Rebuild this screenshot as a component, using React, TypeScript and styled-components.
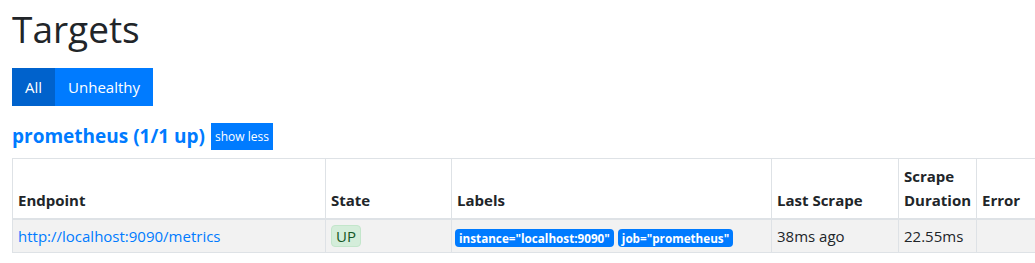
import styled, { createGlobalStyle } from 'styled-components';

const GlobalStyle = createGlobalStyle`
  body {
    margin: 0;
    overflow: hidden;
    background: #ffffff;
    font-family: 'Open Sans', 'Noto Sans', sans-serif;
    font-size: 15px;
    line-height: 1.5;
    color: #212529;
  }
  * {
    box-sizing: border-box;
  }
`;

const Page = styled.div`
  padding: 0 12px;
`;

const Title = styled.h1`
  margin: 6px 0 17px;
  height: 45px;
  font-size: 37px;
  font-weight: 400;
  line-height: 45px;
`;

const FilterGroup = styled.div`
  display: inline-flex;
  height: 38px;
`;

const FilterButton = styled.button<{ $active?: boolean }>`
  border: none;
  padding: 0 13px;
  font-family: inherit;
  font-size: 15px;
  color: #ffffff;
  background: ${(p) => (p.$active ? '#0062cc' : '#007bff')};
`;

const PoolHeader = styled.div`
  display: flex;
  align-items: center;
  gap: 6px;
  margin-top: 16px;
  height: 29px;
`;

const PoolTitle = styled.a`
  font-size: 19px;
  font-weight: 700;
  color: #007bff;
  text-decoration: none;
`;

const SmallButton = styled.button`
  border: none;
  height: 27px;
  padding: 0 4px;
  font-family: inherit;
  font-size: 12px;
  color: #ffffff;
  background: #007bff;
`;

const Table = styled.table`
  margin-top: 7px;
  width: 1100px;
  table-layout: fixed;
  border-collapse: collapse;
`;

const HeadCell = styled.th<{ $w: number }>`
  width: ${(p) => p.$w}px;
  padding: 5px 5px 6px;
  border: 1px solid #dee2e6;
  border-bottom: 2px solid #dee2e6;
  text-align: left;
  vertical-align: bottom;
  font-size: 15px;
  font-weight: 700;
  line-height: 24px;
`;

const Row = styled.tr`
  background: #f2f2f2;
`;

const Cell = styled.td`
  padding: 4px 5px;
  border: 1px solid #dee2e6;
  vertical-align: middle;
  line-height: 24px;
  white-space: nowrap;
`;

const EndpointLink = styled.a`
  color: #007bff;
  text-decoration: none;
`;

const StateBadge = styled.span`
  display: inline-block;
  padding: 0 4px;
  line-height: 20px;
  border: 1px solid #c3e6cb;
  border-radius: 4px;
  background: #d4edda;
  color: #155724;
`;

const LabelBadge = styled.span`
  display: inline-block;
  margin-right: 4px;
  padding: 0 4px;
  line-height: 18px;
  border-radius: 4px;
  background: #007bff;
  color: #ffffff;
  font-size: 11.7px;
  font-weight: 700;
  vertical-align: middle;

  &:first-child {
    margin-left: -2px;
  }
`;

const columns = [
  { name: 'Endpoint', w: 313 },
  { name: 'State', w: 126 },
  { name: 'Labels', w: 320 },
  { name: 'Last Scrape', w: 127 },
  { name: 'Scrape Duration', w: 78 },
  { name: 'Error', w: 136 },
];

export default function App() {
  return (
    <Page>
      <GlobalStyle />
      <Title>Targets</Title>
      <FilterGroup>
        <FilterButton $active>All</FilterButton>
        <FilterButton>Unhealthy</FilterButton>
      </FilterGroup>
      <PoolHeader>
        <PoolTitle href="#prometheus">prometheus (1/1 up)</PoolTitle>
        <SmallButton>show less</SmallButton>
      </PoolHeader>
      <Table>
        <thead>
          <tr>
            {columns.map((c) => (
              <HeadCell key={c.name} $w={c.w}>
                {c.name}
              </HeadCell>
            ))}
          </tr>
        </thead>
        <tbody>
          <Row>
            <Cell>
              <EndpointLink href="#">http://localhost:9090/metrics</EndpointLink>
            </Cell>
            <Cell>
              <StateBadge>UP</StateBadge>
            </Cell>
            <Cell>
              <LabelBadge>instance="localhost:9090"</LabelBadge>
              <LabelBadge>job="prometheus"</LabelBadge>
            </Cell>
            <Cell>38ms ago</Cell>
            <Cell>22.55ms</Cell>
            <Cell></Cell>
          </Row>
        </tbody>
      </Table>
    </Page>
  );
}
